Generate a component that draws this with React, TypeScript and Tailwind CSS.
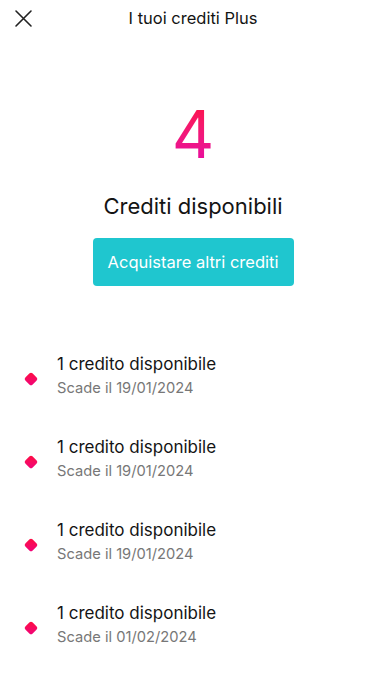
import React from 'react';

const credits = [
  { label: '1 credito disponibile', expires: '19/01/2024' },
  { label: '1 credito disponibile', expires: '19/01/2024' },
  { label: '1 credito disponibile', expires: '19/01/2024' },
  { label: '1 credito disponibile', expires: '01/02/2024' },
];

export default function App() {
  return (
    <div className="w-[386px] h-[685px] bg-white text-[#141414] font-['Inter','Noto_Sans',sans-serif] overflow-hidden">
      {/* Header */}
      <div className="relative h-[36px] flex items-center justify-center">
        <button type="button" className="absolute left-[13px] top-[8px] w-[20px] h-[20px] flex items-center justify-center">
          <svg width="19" height="19" viewBox="0 0 19 19" fill="none" stroke="#222" strokeWidth="1.6" strokeLinecap="round">
            <path d="M2 2L17 17M17 2L2 17" />
          </svg>
        </button>
        <span className="text-[16.5px] leading-none mt-[1px]">I tuoi crediti Plus</span>
      </div>

      {/* Summary */}
      <div className="flex flex-col items-center pt-[65px]">
        <span className="text-[66px] leading-none font-normal bg-gradient-to-b from-[#ff1040] to-[#e600a6] bg-clip-text text-transparent">
          4
        </span>
        <h1 className="mt-[28px] text-[22px] leading-none">Crediti disponibili</h1>
        <button
          type="button"
          className="mt-[21px] w-[201px] h-[48px] rounded-[4px] bg-[#1fc6cf] text-white text-[16.5px] flex items-center justify-center"
        >
          Acquistare altri crediti
        </button>
      </div>

      {/* Credit list */}
      <div className="mt-[68px] flex flex-col gap-[39px]">
        {credits.map((c, i) => (
          <div key={i} className="flex items-center">
            <div className="w-[57px] flex justify-center pt-[5px] pl-[4px]">
              <span className="w-[10px] h-[10px] rotate-45 rounded-[2px] bg-gradient-to-br from-[#ff0a3c] to-[#f0007a]" />
            </div>
            <div className="flex flex-col">
              <span className="text-[17px] leading-[20px]">{c.label}</span>
              <span className="text-[14.7px] leading-[20px] mt-[4px] text-[#777]">Scade il {c.expires}</span>
            </div>
          </div>
        ))}
      </div>
    </div>
  );
}
